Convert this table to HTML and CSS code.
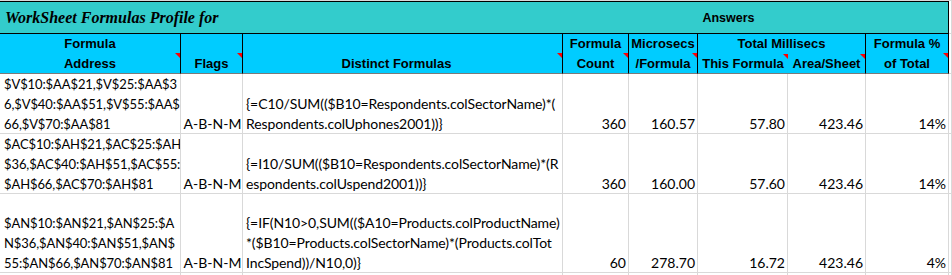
FILE: index.html
```html
<!DOCTYPE html>
<html>
<head>
<meta charset="utf-8">
<link rel="stylesheet" href="styles.css">
</head>
<body>
<div class="sheet">
  <div class="row title-row">
    <div class="tc title">WorkSheet Formulas Profile for</div>
    <div class="tc answers">Answers</div>
    <div class="filler"></div>
  </div>
  <div class="row head-row">
    <div class="hc span2 ca"><span>Formula</span><span>Address</span><i class="tri low"></i></div>
    <div class="hc span2 cb"><span>Flags</span><i class="tri low"></i></div>
    <div class="hc span2 cc"><span>Distinct Formulas</span><i class="tri low"></i></div>
    <div class="hc span2 cd"><span>Formula</span><span>Count</span><i class="tri low"></i></div>
    <div class="hc span2 ce"><span>Microsecs</span><span>/Formula</span><i class="tri low"></i></div>
    <div class="hc merged">Total Millisecs</div>
    <div class="hc sub cf">This Formula<i class="tri"></i></div>
    <div class="hc sub cg">Area/Sheet<i class="tri"></i></div>
    <div class="hc span2 ch"><span>Formula %</span><span>of Total</span><i class="tri low"></i></div>
    <div class="filler span2 hfill"></div>
  </div>
  <div class="row data-row r1">
    <div class="dc addr"><span>$V$10:$AA$21,$V$25:$AA$3</span><span>6,$V$40:$AA$51,$V$55:$AA$</span><span>66,$V$70:$AA$81</span></div>
    <div class="dc flags">A-B-N-M</div>
    <div class="dc formula"><span>{=C10/SUM(($B10=Respondents.colSectorName)*(</span><span>Respondents.colUphones2001))}</span></div>
    <div class="dc num">360</div>
    <div class="dc num">160.57</div>
    <div class="dc num">57.80</div>
    <div class="dc num">423.46</div>
    <div class="dc num">14%</div>
    <div class="filler"></div>
  </div>
  <div class="row data-row r2">
    <div class="dc addr"><span>$AC$10:$AH$21,$AC$25:$AH</span><span>$36,$AC$40:$AH$51,$AC$55:</span><span>$AH$66,$AC$70:$AH$81</span></div>
    <div class="dc flags">A-B-N-M</div>
    <div class="dc formula"><span>{=I10/SUM(($B10=Respondents.colSectorName)*(R</span><span>espondents.colUspend2001))}</span></div>
    <div class="dc num">360</div>
    <div class="dc num">160.00</div>
    <div class="dc num">57.60</div>
    <div class="dc num">423.46</div>
    <div class="dc num">14%</div>
    <div class="filler"></div>
  </div>
  <div class="row data-row r3">
    <div class="dc addr"><span>$AN$10:$AN$21,$AN$25:$A</span><span>N$36,$AN$40:$AN$51,$AN$</span><span>55:$AN$66,$AN$70:$AN$81</span></div>
    <div class="dc flags">A-B-N-M</div>
    <div class="dc formula"><span>{=IF(N10&gt;0,SUM(($A10=Products.colProductName)</span><span>*($B10=Products.colSectorName)*(Products.colTot</span><span>IncSpend))/N10,0)}</span></div>
    <div class="dc num">60</div>
    <div class="dc num">278.70</div>
    <div class="dc num">16.72</div>
    <div class="dc num">423.46</div>
    <div class="dc num">4%</div>
    <div class="filler"></div>
  </div>
  <div class="row data-row r4">
    <div class="dc"></div><div class="dc"></div><div class="dc"></div><div class="dc"></div>
    <div class="dc"></div><div class="dc"></div><div class="dc"></div><div class="dc"></div>
    <div class="filler"></div>
  </div>
</div>
</body>
</html>
```
FILE: styles.css
```css
* { box-sizing: border-box; }
html, body { margin: 0; padding: 0; background: #fff; }
.sheet {
  width: 952px;
  border-top: 1px solid #d9d9d9;
  overflow: hidden;
  height: 275px;
}
.row {
  display: grid;
  grid-template-columns: 181px 62px 320px 66px 69px 90px 78px 83px 3px;
}
.filler {
  border-right: 1px solid #d9d9d9;
  border-bottom: 1px solid #d9d9d9;
}

/* title row */
.title-row { height: 33px; }
.tc {
  background: #33cccc;
  border-top: 1px solid #000;
  border-bottom: 1px solid #000;
  display: flex;
  align-items: center;
  color: #000;
}
.title {
  grid-column: 1 / 4;
  font-family: "Liberation Serif", serif;
  font-weight: bold;
  font-style: italic;
  font-size: 16px;
  padding-left: 5px;
  padding-top: 1px;
}
.answers {
  grid-column: 4 / 9;
  border-right: 1px solid #000;
  justify-content: center;
  padding-right: 54px;
  font-family: "Liberation Sans", Arial, sans-serif;
  font-weight: bold;
  font-size: 12.5px;
  padding-top: 1px;
}

/* header row */
.head-row {
  grid-template-rows: 19.5px 20.5px;
  font-family: "Liberation Sans", Arial, sans-serif;
  font-weight: bold;
  font-size: 13px;
  color: #000;
}
.hc {
  position: relative;
  background: #00ccff;
  border-right: 1px solid #000;
  text-align: center;
  line-height: 19.5px;
  white-space: nowrap;
}
.span2 {
  grid-row: 1 / 3;
  display: flex;
  flex-direction: column;
  justify-content: flex-end;
  border-bottom: 1px solid #7a7a7a;
}
.cc { padding-right: 12px; }
.merged {
  grid-column: 6 / 8;
  grid-row: 1;
}
.sub {
  grid-row: 2;
  border-bottom: 1px solid #7a7a7a;
  line-height: 19.5px;
}
.cf { grid-column: 6; border-right: none; }
.cg { grid-column: 7; }
.ch { grid-column: 8; }
.hfill { grid-column: 9; background: #fff; border-bottom: 1px solid #d9d9d9; }

.tri {
  position: absolute;
  top: 0;
  right: 0;
  width: 0;
  height: 0;
  border-top: 5px solid #ff0000;
  border-left: 5px solid transparent;
}
.tri.low { top: 19px; }

/* data rows */
.data-row {
  font-family: "Lato", "Open Sans", sans-serif;
  font-size: 14px;
  color: #000;
}
.r1 { height: 60px; }
.r2 { height: 60px; }
.r3 { height: 79px; }
.r4 { height: 20px; }
.dc {
  border-right: 1px solid #d9d9d9;
  box-shadow: inset 0 -1px 0 #d9d9d9;
  display: flex;
  flex-direction: column;
  justify-content: flex-end;
  line-height: 20px;
  white-space: nowrap;
  overflow: hidden;
}
.addr { padding-left: 4px; font-size: 13px; letter-spacing: -0.1px; }
.flags { text-align: center; padding-left: 2px; }
.formula { padding-left: 3px; letter-spacing: -0.1px; }
.num { text-align: right; padding-right: 2px; }
```
